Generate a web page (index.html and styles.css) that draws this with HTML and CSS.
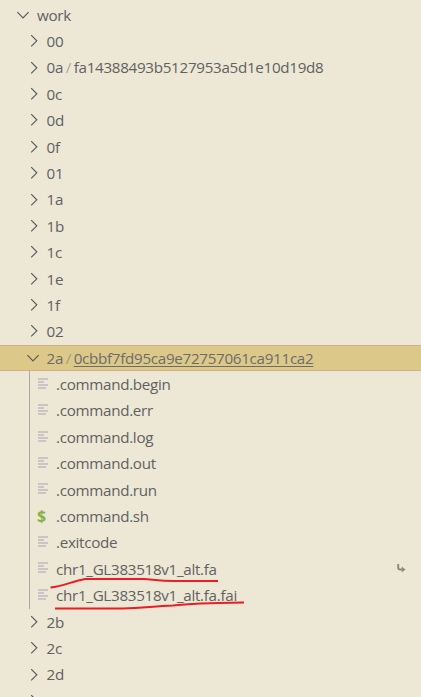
FILE: index.html
```html
<!DOCTYPE html>
<html lang="en">
<head>
<meta charset="utf-8">
<title>work</title>
<link rel="stylesheet" href="styles.css">
</head>
<body>
<svg class="defs" aria-hidden="true">
  <symbol id="right" viewBox="0 0 20 20"><path d="M7.2 4.2 12.800 9.800 7.2 15.400" fill="none" stroke="currentColor" stroke-width="1.2"/></symbol>
  <symbol id="down" viewBox="0 0 20 20"><path d="M4.400 7.2 10 12.800 15.600 7.2" fill="none" stroke="currentColor" stroke-width="1.2"/></symbol>
  <symbol id="lines" viewBox="0 0 10 11"><path d="M0 1h10M0 4h6M0 7h10M0 10h8" fill="none" stroke="currentColor" stroke-width="1.9"/></symbol>
</svg>
<main class="tree">
  <div class="row root"><svg class="chev"><use href="#down"/></svg><span>work</span></div>
  <div class="row"><svg class="chev"><use href="#right"/></svg><span>00</span></div>
  <div class="row"><svg class="chev"><use href="#right"/></svg><span>0a</span><span class="sep">/</span><span class="hash">fa14388493b5127953a5d1e10d19d8</span></div>
  <div class="row"><svg class="chev"><use href="#right"/></svg><span>0c</span></div>
  <div class="row"><svg class="chev"><use href="#right"/></svg><span>0d</span></div>
  <div class="row"><svg class="chev"><use href="#right"/></svg><span>0f</span></div>
  <div class="row"><svg class="chev"><use href="#right"/></svg><span>01</span></div>
  <div class="row"><svg class="chev"><use href="#right"/></svg><span>1a</span></div>
  <div class="row"><svg class="chev"><use href="#right"/></svg><span>1b</span></div>
  <div class="row"><svg class="chev"><use href="#right"/></svg><span>1c</span></div>
  <div class="row"><svg class="chev"><use href="#right"/></svg><span>1e</span></div>
  <div class="row"><svg class="chev"><use href="#right"/></svg><span>1f</span></div>
  <div class="row"><svg class="chev"><use href="#right"/></svg><span>02</span></div>
  <div class="row selected"><svg class="chev open"><use href="#down"/></svg><span>2a</span><span class="sep">/</span><span class="hash active">0cbbf7fd95ca9e72757061ca911ca2</span></div>
  <div class="files">
    <div class="row file"><svg class="doc"><use href="#lines"/></svg><span>.command.begin</span></div>
    <div class="row file"><svg class="doc"><use href="#lines"/></svg><span>.command.err</span></div>
    <div class="row file"><svg class="doc"><use href="#lines"/></svg><span>.command.log</span></div>
    <div class="row file"><svg class="doc"><use href="#lines"/></svg><span>.command.out</span></div>
    <div class="row file"><svg class="doc"><use href="#lines"/></svg><span>.command.run</span></div>
    <div class="row file"><span class="shell">$</span><span>.command.sh</span></div>
    <div class="row file"><svg class="doc"><use href="#lines"/></svg><span>.exitcode</span></div>
    <div class="row file"><svg class="doc"><use href="#lines"/></svg><span>chr1_GL383518v1_alt.fa</span><svg class="link" viewBox="0 0 9 9"><path d="M1.200 0v3.500q0 2 2 2H6" fill="none" stroke="currentColor" stroke-width="2"/><path d="M4.800 2.400 8.500 5.500 4.800 8.600z" fill="currentColor"/></svg></div>
    <div class="row file"><svg class="doc"><use href="#lines"/></svg><span>chr1_GL383518v1_alt.fa.fai</span></div>
    <svg class="marks" viewBox="0 0 200 34"><path d="M3.500 13.500C15 12.500 25 7.500 38 5H97C104 5 111 7 127 7H171"/><path d="M8 34.500H76C95 34 105 32.500 126 31.500C142 29.500 154 29 197 28.500"/></svg>
  </div>
  <div class="row"><svg class="chev"><use href="#right"/></svg><span>2b</span></div>
  <div class="row"><svg class="chev"><use href="#right"/></svg><span>2c</span></div>
  <div class="row"><svg class="chev"><use href="#right"/></svg><span>2d</span></div>
  <div class="row"><svg class="chev"><use href="#right"/></svg><span>2e</span></div>
</main>
</body>
</html>
```
FILE: styles.css
```css
* { box-sizing: border-box; }
body { margin: 0; background: #ede8d6; }
.defs { display: none; }
.tree {
  height: 697px;
  padding-top: 1.6px;
  overflow: hidden;
  color: #616161;
  font: 15.2px/26.4px "Open Sans", sans-serif;
  letter-spacing: -0.3px;
}
.row {
  display: flex;
  align-items: center;
  height: 26.4px;
  padding-left: 24px;
  white-space: pre;
}
.root { padding-left: 13px; }
.root .chev { margin-right: 4px; }
.chev { width: 20px; height: 20px; margin-right: 2.6px; flex: none; color: #5b5b5f; }
.chev.open { margin-left: -1px; margin-right: 3.6px; }
.sep { width: 10.6px; text-align: center; opacity: .5; }
.selected {
  background: #dcc98a;
  border: solid #d3af86;
  border-width: 1px 0;
  color: #6c6c6c;
}
.active { text-decoration: underline; text-underline-offset: 2px; text-decoration-thickness: 1px; }
.files { position: relative; margin-left: 29px; border-left: 1px solid #aaa9a5; }
.file { padding-left: 8px; }
.doc { width: 10px; height: 11px; margin: -2px 8px 0 0; flex: none; color: #c9c5c4; }
.shell { width: 19px; margin-left: -1px; color: #8bb04a; font-size: 16px; font-weight: 700; }
.link { width: 9px; height: 9px; margin: 0 15px 0 auto; color: #8d8a80; }
.marks {
  position: absolute;
  left: 17px;
  top: 203.4px;
  width: 200px;
  height: 34px;
  overflow: visible;
  fill: none;
  stroke: #ed1c24;
  stroke-width: 2;
}
```
